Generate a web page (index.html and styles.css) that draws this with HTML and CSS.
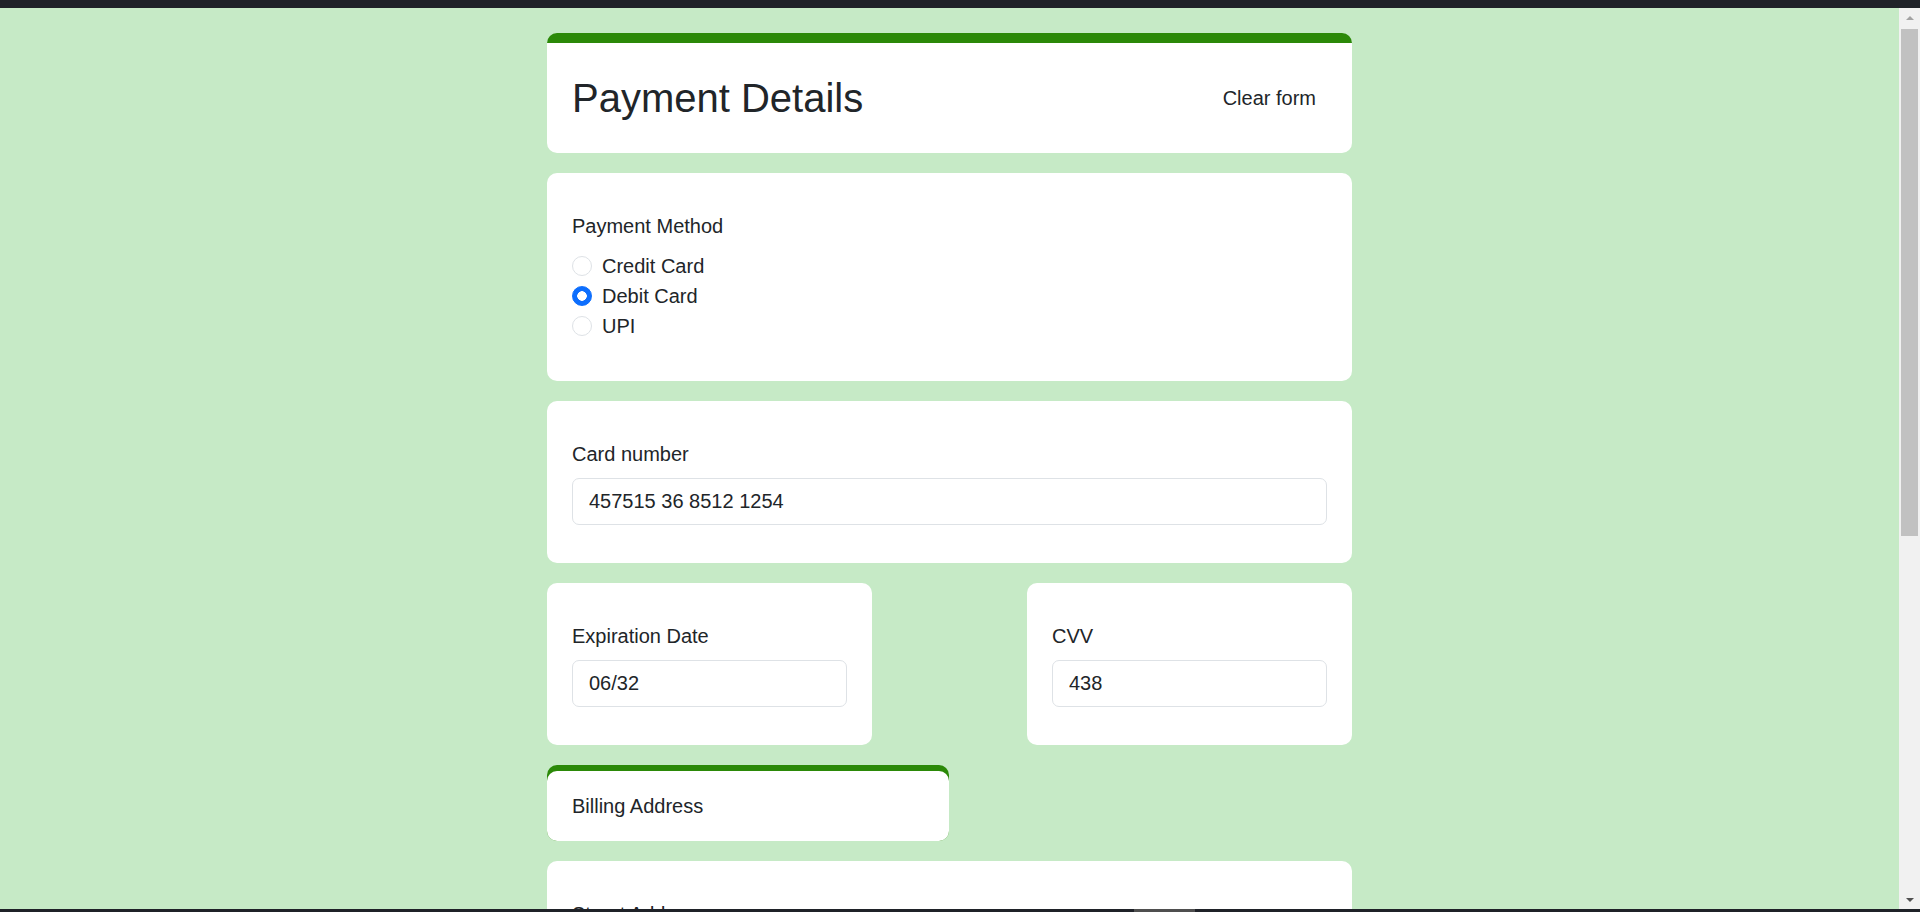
FILE: index.html
```html
<!DOCTYPE html>
<html lang="en">
<head>
<meta charset="utf-8">
<title>Payment Details</title>
<link rel="stylesheet" href="styles.css">
</head>
<body>
<div class="window">
  <div class="topbar"></div>
  <div class="viewport">
    <main class="page">
      <form class="form">
        <section class="card card-header">
          <div class="card-header-body">
            <h1 class="title">Payment Details</h1>
            <button type="button" class="btn-clear">Clear form</button>
          </div>
        </section>

        <section class="card card-field card-radio">
          <div class="field-label field-label-radio">Payment Method</div>
          <label class="radio-row"><input type="radio" name="method" class="radio"><span>Credit Card</span></label>
          <label class="radio-row"><input type="radio" name="method" class="radio" checked><span>Debit Card</span></label>
          <label class="radio-row"><input type="radio" name="method" class="radio"><span>UPI</span></label>
        </section>

        <section class="card card-field">
          <label class="field-label" for="cardnum">Card number</label>
          <input id="cardnum" class="text-input" type="text" value="457515 36 8512 1254">
        </section>

        <div class="split-row">
          <section class="card card-field card-half">
            <label class="field-label" for="exp">Expiration Date</label>
            <input id="exp" class="text-input" type="text" value="06/32">
          </section>
          <section class="card card-field card-half">
            <label class="field-label" for="cvv">CVV</label>
            <input id="cvv" class="text-input" type="text" value="438">
          </section>
        </div>

        <section class="section-card">
          <div class="section-card-inner">Billing Address</div>
        </section>

        <section class="card card-field">
          <label class="field-label" for="street">Street Address</label>
          <input id="street" class="text-input" type="text" value="">
        </section>
      </form>
    </main>
    <div class="scrollbar">
      <div class="scroll-arrow scroll-up"></div>
      <div class="scroll-track">
        <div class="scroll-thumb"></div>
      </div>
      <div class="scroll-arrow scroll-down"></div>
    </div>
  </div>
  <div class="bottombar"><div class="bottombar-thumb"></div></div>
</div>
</body>
</html>
```

FILE: styles.css
```css
* { box-sizing: border-box; }

html, body {
  margin: 0;
  padding: 0;
  height: 100%;
  overflow: hidden;
}

body {
  font-family: "Liberation Sans", Arial, sans-serif;
  font-size: 20px;
  line-height: 30px;
  color: #212529;
}

.window {
  display: flex;
  flex-direction: column;
  height: 912px;
}

.topbar {
  height: 8px;
  flex: none;
  background: #1f2228;
}

.viewport {
  flex: 1;
  min-height: 0;
  display: flex;
}

.page {
  flex: 1;
  min-width: 0;
  overflow: hidden;
  background: #c6eac6;
}

.form {
  width: 805px;
  margin: 25px auto 0;
  display: flex;
  flex-direction: column;
  gap: 20px;
}

.card {
  background: #fff;
  border-radius: 10px;
}

.card-header {
  border-top: 10px solid #2b8908;
  overflow: hidden;
}

.card-header-body {
  display: flex;
  justify-content: space-between;
  align-items: center;
  padding: 31px 24px 31px 25px;
}

.title {
  margin: 0;
  font-size: 40px;
  line-height: 48px;
  font-weight: 400;
}

.btn-clear {
  font: inherit;
  color: #212529;
  background: transparent;
  border: none;
  padding: 6px 12px;
  line-height: 30px;
  border-radius: 6px;
}

.card-field {
  display: flex;
  flex-direction: column;
  padding: 38px 25px 38px;
}

.card-radio {
  padding-bottom: 40px;
}

.field-label {
  display: block;
  margin-bottom: 9px;
}

.field-label-radio {
  margin-bottom: 10px;
}

.radio-row {
  display: flex;
  align-items: center;
  height: 30px;
}

.radio {
  appearance: none;
  -webkit-appearance: none;
  width: 20px;
  height: 20px;
  margin: 0 10px 0 0;
  border: 1px solid #dee2e6;
  border-radius: 50%;
  background: #fff;
  flex: none;
}

.radio:checked {
  border-color: #0d6efd;
  background: radial-gradient(circle, #fff 0 4.5px, #0d6efd 5px);
}

.text-input {
  display: block;
  width: 100%;
  height: 47px;
  padding: 0 16px;
  font: inherit;
  color: #212529;
  border: 1px solid #dee2e6;
  border-radius: 7px;
  background: #fff;
  outline: none;
}

.split-row {
  display: flex;
  justify-content: space-between;
}

.card-half {
  width: 325px;
}

.section-card {
  width: 402px;
  background: #2b8908;
  border-radius: 10px;
  padding-top: 6px;
}

.section-card-inner {
  background: #fff;
  border-radius: 10px;
  padding: 20px 25px;
}

.scrollbar {
  width: 21px;
  flex: none;
  background: #f1f1f1;
  display: flex;
  flex-direction: column;
  align-items: center;
}

.scroll-arrow {
  width: 0;
  height: 0;
  border-left: 4px solid transparent;
  border-right: 4px solid transparent;
  flex: none;
}

.scroll-up {
  margin-top: 8px;
  border-bottom: 4px solid #a3a3a3;
}

.scroll-down {
  margin-bottom: 7px;
  border-top: 4px solid #505050;
}

.scroll-track {
  flex: 1;
  width: 100%;
  padding: 9px 2px 0;
}

.scroll-thumb {
  height: 507px;
  background: #c1c1c1;
}

.bottombar {
  height: 3px;
  flex: none;
  background: #1f2228;
  display: flex;
}

.bottombar-thumb {
  margin-left: 1134px;
  width: 61px;
  background: #4f4f4f;
}
```
